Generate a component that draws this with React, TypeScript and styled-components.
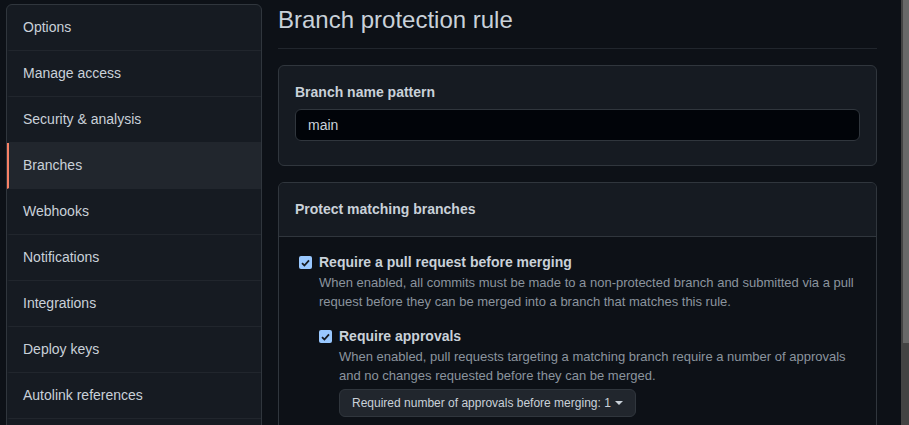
import React from "react";
import styled, { createGlobalStyle } from "styled-components";

const Global = createGlobalStyle`
  html, body { margin: 0; padding: 0; height: 100%; overflow: hidden; background: #0d1117; }
  body { font-family: "Liberation Sans", Arial, sans-serif; color: #c9d1d9; font-size: 14px; }
  * { box-sizing: border-box; }
`;

const Shell = styled.div`
  display: flex;
  height: 425px;
  width: 909px;
  overflow: hidden;
`;

const Page = styled.div`
  flex: 1;
  display: flex;
  gap: 16px;
  padding: 4px 24px 0 6px;
  min-width: 0;
`;

const ScrollTrack = styled.div`
  width: 8px;
  background: #434343;
  display: flex;
  flex-direction: column;
  padding-left: 2px;
`;

const ScrollThumb = styled.div`
  height: 343px;
  background: #686868;
`;

const Sidebar = styled.nav`
  width: 256px;
  flex: none;
  align-self: flex-start;
  min-height: 440px;
  background: #161b22;
  border: 1px solid #30363d;
  border-radius: 6px 6px 0 0;
  overflow: hidden;
`;

const NavItem = styled.div<{ $active?: boolean }>`
  display: block;
  padding: 12px 16px 12px 14px;
  line-height: 21px;
  font-size: 14px;
  color: #c9d1d9;
  border-bottom: 1px solid #21262d;
  border-left: 2px solid ${(p) => (p.$active ? "#f78166" : "transparent")};
  background: ${(p) => (p.$active ? "#21262d" : "transparent")};
`;

const Main = styled.main`
  flex: 1;
  min-width: 0;
  margin-top: -4px;
`;

const Subhead = styled.h2`
  margin: 0 0 16px;
  padding: 2px 0 10px;
  font-size: 24px;
  line-height: 36px;
  font-weight: 400;
  color: #c9d1d9;
  border-bottom: 1px solid #21262d;
`;

const Box = styled.section<{ $open?: boolean }>`
  border: 1px solid #30363d;
  border-radius: ${(p) => (p.$open ? "6px 6px 0 0" : "6px")};
  background: #161b22;
  margin-bottom: 16px;
  overflow: hidden;
`;

const BoxBody = styled.div`
  padding: 16px;
`;

const BoxHeader = styled.div`
  padding: 16px;
  border-bottom: 1px solid #30363d;
  font-weight: 700;
  font-size: 14px;
  line-height: 21px;
  background: #161b22;
`;

const BoxContent = styled.div`
  background: #0d1117;
  padding: 15px 16px 16px;
  min-height: 200px;
`;

const Label = styled.label`
  display: block;
  font-weight: 700;
  font-size: 14px;
  line-height: 21px;
  margin-bottom: 6px;
`;

const Input = styled.div`
  height: 32px;
  background: #010409;
  border: 1px solid #30363d;
  border-radius: 6px;
  padding: 0 12px;
  font-size: 14px;
  line-height: 30px;
  color: #c9d1d9;
  margin-bottom: 8px;
`;

const CheckRow = styled.div<{ $indent?: number; $gap?: number }>`
  display: grid;
  grid-template-columns: 20px 1fr;
  margin-left: ${(p) => p.$indent ?? 0}px;
  margin-top: ${(p) => p.$gap ?? 0}px;
`;

const CheckCol = styled.div`
  height: 21px;
  display: flex;
  align-items: center;
`;

const Check = styled.span`
  width: 13px;
  height: 13px;
  border-radius: 2px;
  background: #99c8ff;
  display: flex;
  align-items: center;
  justify-content: center;
`;

const CheckLabel = styled.div`
  font-weight: 700;
  font-size: 14px;
  line-height: 21px;
  color: #c9d1d9;
`;

const Note = styled.p`
  margin: 0;
  font-size: 13px;
  line-height: 19px;
  color: #8b949e;
`;

const SelectButton = styled.button`
  margin-top: 4px;
  height: 28px;
  padding: 0 12px;
  background: #21262d;
  border: 1px solid #30363d;
  border-radius: 6px;
  color: #c9d1d9;
  font-family: "Liberation Sans", Arial, sans-serif;
  font-size: 12px;
  display: inline-flex;
  align-items: center;
  gap: 4px;
`;

const CheckMark = () => (
  <svg width="9" height="8" viewBox="0 0 9 8">
    <path d="M1 4.2 L3.4 6.5 L8 1.3" fill="none" stroke="#161b22" strokeWidth="1.8" />
  </svg>
);

const Caret = () => (
  <svg width="8" height="4" viewBox="0 0 8 4">
    <path d="M0 0 L8 0 L4 4 Z" fill="#c9d1d9" />
  </svg>
);

const navItems = [
  "Options",
  "Manage access",
  "Security & analysis",
  "Branches",
  "Webhooks",
  "Notifications",
  "Integrations",
  "Deploy keys",
  "Autolink references",
];

export default function App() {
  return (
    <>
      <Global />
      <Shell>
        <Page>
          <Sidebar>
            {navItems.map((n) => (
              <NavItem key={n} $active={n === "Branches"}>
                {n}
              </NavItem>
            ))}
          </Sidebar>
          <Main>
            <Subhead>Branch protection rule</Subhead>
            <Box>
              <BoxBody>
                <Label>Branch name pattern</Label>
                <Input>main</Input>
              </BoxBody>
            </Box>
            <Box $open>
              <BoxHeader>Protect matching branches</BoxHeader>
              <BoxContent>
                <CheckRow $indent={4}>
                  <CheckCol>
                    <Check>
                      <CheckMark />
                    </Check>
                  </CheckCol>
                  <div>
                    <CheckLabel>Require a pull request before merging</CheckLabel>
                    <Note>
                      When enabled, all commits must be made to a non-protected branch and submitted via a pull
                      request before they can be merged into a branch that matches this rule.
                    </Note>
                    <CheckRow $gap={15}>
                      <CheckCol>
                        <Check>
                          <CheckMark />
                        </Check>
                      </CheckCol>
                      <div>
                        <CheckLabel>Require approvals</CheckLabel>
                        <Note>
                          When enabled, pull requests targeting a matching branch require a number of approvals
                          and no changes requested before they can be merged.
                        </Note>
                        <SelectButton>
                          Required number of approvals before merging: 1
                          <Caret />
                        </SelectButton>
                      </div>
                    </CheckRow>
                  </div>
                </CheckRow>
              </BoxContent>
            </Box>
          </Main>
        </Page>
        <ScrollTrack>
          <ScrollThumb />
        </ScrollTrack>
      </Shell>
    </>
  );
}
